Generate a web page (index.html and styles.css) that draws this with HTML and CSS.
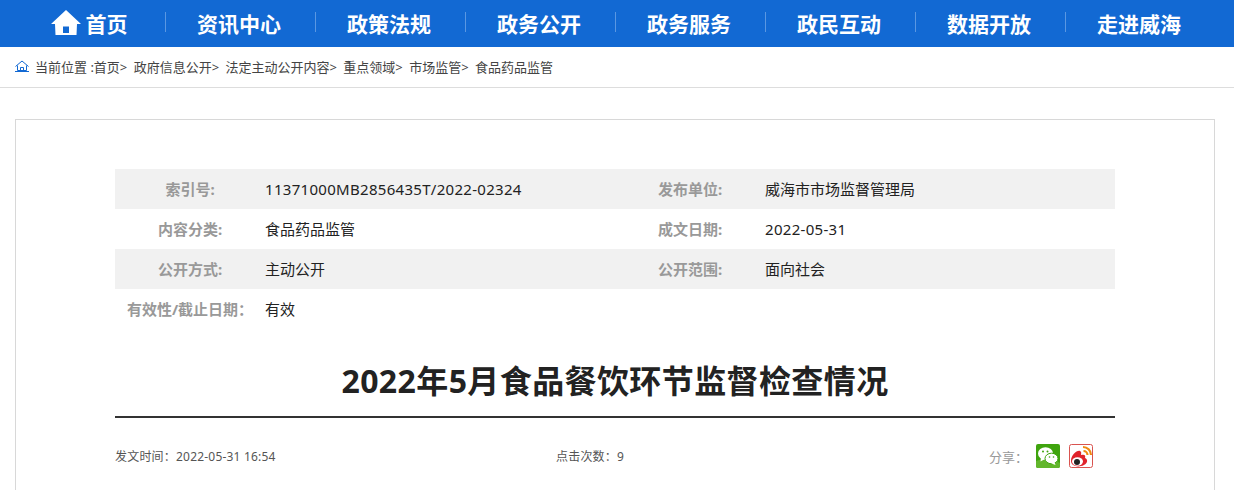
FILE: index.html
```html
<!DOCTYPE html>
<html lang="zh-CN">
<head>
<meta charset="utf-8">
<title>2022年5月食品餐饮环节监督检查情况</title>
<link rel="stylesheet" href="styles.css">
</head>
<body>
<nav class="nav">
  <a class="nav-item"><svg class="home" viewBox="0 0 30 25"><path fill="#fff" fill-rule="evenodd" d="M15 0 L30 14 L26 14 L25.500 25 L4.500 25 L4 14 L0 14 Z M12 16.500 V23 H18 V16.500 Z"/></svg>首页</a>
  <a class="nav-item">资讯中心</a>
  <a class="nav-item">政策法规</a>
  <a class="nav-item">政务公开</a>
  <a class="nav-item">政务服务</a>
  <a class="nav-item">政民互动</a>
  <a class="nav-item">数据开放</a>
  <a class="nav-item">走进威海</a>
</nav>
<div class="crumbs">
  <svg class="crumb-icon" viewBox="0 0 14 12"><path fill="none" stroke="#1269d3" d="M0.500 6.500 L7 1 L13.500 6.500 M2.500 5.500 V10.500 H11.500 V5.500 M5.500 10.500 V7.500 H8.500 V10.500 M0 11.500 H14"/></svg>
  <span>当前位置 :首页&gt;</span><span>政府信息公开&gt;</span><span>法定主动公开内容&gt;</span><span>重点领域&gt;</span><span>市场监管&gt;</span><span>食品药品监管</span>
</div>
<main class="card">
  <div class="info">
    <div class="row shade">
      <div class="label">索引号:</div><div class="value num">11371000MB2856435T/2022-02324</div>
      <div class="label">发布单位:</div><div class="value">威海市市场监督管理局</div>
    </div>
    <div class="row">
      <div class="label">内容分类:</div><div class="value">食品药品监管</div>
      <div class="label">成文日期:</div><div class="value num">2022-05-31</div>
    </div>
    <div class="row shade">
      <div class="label">公开方式:</div><div class="value">主动公开</div>
      <div class="label">公开范围:</div><div class="value">面向社会</div>
    </div>
    <div class="row">
      <div class="label">有效性/截止日期：</div><div class="value">有效</div>
    </div>
  </div>
  <h1 class="title">2022年5月食品餐饮环节监督检查情况</h1>
  <div class="meta">
    <span class="meta-text">发文时间：2022-05-31 16:54</span>
    <span class="meta-text">点击次数：9</span>
    <div class="share">
      <span class="share-label">分享：</span>
      <svg class="share-icon" viewBox="0 0 24 24"><rect width="24" height="24" rx="2" fill="#3fa40e"/><path d="M0 17 Q12 12 24 19 V22 a2 2 0 0 1-2 2 H2 a2 2 0 0 1-2-2 Z" fill="#62b62c"/><ellipse cx="9.500" cy="9.500" rx="7.500" ry="6.300" fill="#fff"/><path d="M5 13 L4.500 17.500 L9 15 Z" fill="#fff"/><ellipse cx="15.500" cy="14.500" rx="6.500" ry="5.300" fill="#fff" stroke="#3fa40e"/><path d="M18.500 18 L19.500 21 L15.500 19.500 Z" fill="#fff"/><circle cx="7" cy="7.500" r="1" fill="#3fa40e"/><circle cx="11.500" cy="7.500" r="1" fill="#3fa40e"/><circle cx="13.500" cy="13" r=".8" fill="#3fa40e"/><circle cx="17.500" cy="13" r=".8" fill="#3fa40e"/></svg>
      <svg class="share-icon" viewBox="0 0 24 24"><rect x=".5" y=".5" width="23" height="23" rx="2" fill="#fff" stroke="#d9534f"/><path d="M14 3 a8 8 0 0 1 8 8 M14.500 7 a4 4 0 0 1 4 4" fill="none" stroke="#f08a12" stroke-width="2.200"/><path d="M2 17 C2 11 8 6 11 7 C13 8 12 10 12 11 C15 10 17 11 16 14 C19 15 19 19 15 21 C9 24 2 22 2 17 Z" fill="#e0232b"/><ellipse cx="8.500" cy="17.500" rx="5.500" ry="4.200" fill="#fff"/><circle cx="8" cy="18" r="3" fill="#222"/></svg>
    </div>
  </div>
</main>
</body>
</html>
```
FILE: styles.css
```css
* { box-sizing: border-box; }
html, body { margin: 0; padding: 0; }
body {
  background: #fff;
  color: #222;
  font-family: "Noto Sans", "Noto Sans CJK SC", sans-serif;
  height: 490px;
  overflow: hidden;
}
.nav {
  display: flex;
  height: 47px;
  padding-left: 15px;
  background: #1269d3;
}
.nav-item {
  position: relative;
  display: flex;
  align-items: center;
  justify-content: center;
  width: 150px;
  padding: 0 2px 2px 0;
  color: #fff;
  font-size: 21px;
  font-weight: 700;
}
.nav-item + .nav-item::before {
  content: "";
  position: absolute;
  left: 0;
  top: 12px;
  height: 20px;
  width: 1px;
  background: #5a97e2;
}
.home { width: 30px; height: 25px; margin-right: 5px; margin-top: -1px; }
.crumbs {
  display: flex;
  align-items: center;
  gap: 6.400px;
  height: 41px;
  padding: 0 0 2px 15px;
  border-bottom: 1px solid #ddd;
  font-size: 13px;
  color: #444;
}
.crumb-icon { width: 14px; height: 12px; margin-right: -.4px; }
.card {
  margin: 31px 19px 0 15px;
  height: 372px;
  padding: 49px 99px 0;
  border: 1px solid #d8d8d8;
  border-bottom: 0;
}
.info { font-size: 15px; }
.row { display: grid; grid-template-columns: 150px 350px 150px 350px; height: 40px; align-items: center; padding-bottom: 1px; }
.shade { background: #f1f1f1; }
.label { text-align: center; font-weight: 700; color: #999; }
.value { color: #222; }
.num { letter-spacing: .3px; }
.title {
  margin: 0;
  height: 89px;
  padding-top: 30px;
  border-bottom: 2px solid #333;
  text-align: center;
  font-size: 32px;
  line-height: 44px;
  font-weight: 700;
  letter-spacing: .4px;
  color: #222;
}
.meta {
  display: grid;
  grid-template-columns: 441px 1fr auto;
  align-items: center;
  height: 38px;
  margin-top: 19px;
  font-size: 12px;
  color: #555;
}
.meta-text { letter-spacing: .2px; }
.share { display: flex; align-items: center; gap: 9px; padding-right: 22px; }
.share-label { font-size: 13px; color: #999; margin-right: -1px; }
.share-icon { width: 24px; height: 24px; }
```
